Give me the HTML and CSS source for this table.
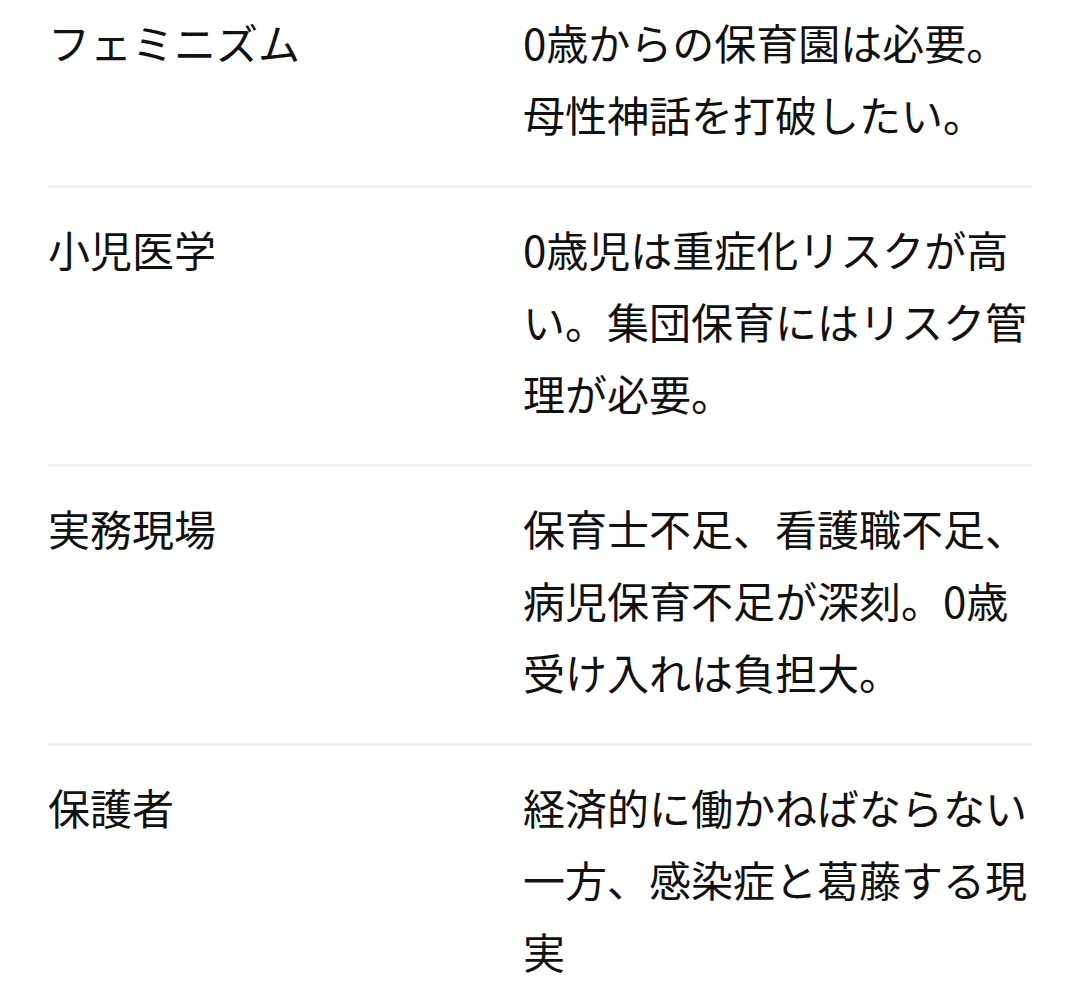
FILE: index.html
```html
<!DOCTYPE html>
<html lang="ja">
<head>
<meta charset="utf-8">
<link rel="stylesheet" href="styles.css">
</head>
<body>
<div class="table">
  <div class="row first">
    <div class="key">フェミニズム</div>
    <div class="val">0歳からの保育園は必要。母性神話を打破したい。</div>
  </div>
  <div class="row">
    <div class="key">小児医学</div>
    <div class="val">0歳児は重症化リスクが高い。集団保育にはリスク管理が必要。</div>
  </div>
  <div class="row">
    <div class="key">実務現場</div>
    <div class="val">保育士不足、看護職不足、病児保育不足が深刻。0歳受け入れは負担大。</div>
  </div>
  <div class="row last">
    <div class="key">保護者</div>
    <div class="val">経済的に働かねばならない一方、感染症と葛藤する現実</div>
  </div>
</div>
</body>
</html>
```
FILE: styles.css
```css
html, body {
  margin: 0;
  padding: 0;
  background: #ffffff;
}
body {
  font-family: "Noto Sans CJK JP", "Noto Sans", sans-serif;
  color: #111111;
  font-size: 42px;
  line-height: 72px;
}
.table {
  padding: 0 48px;
}
.row {
  display: grid;
  grid-template-columns: 475px 1fr;
  padding: 25px 0 35px;
  border-bottom: 3px solid #f1f1f1;
}
.row.first {
  padding-top: 6px;
}
.row.last {
  border-bottom: none;
}
.key, .val {
  word-break: break-all;
}
```
